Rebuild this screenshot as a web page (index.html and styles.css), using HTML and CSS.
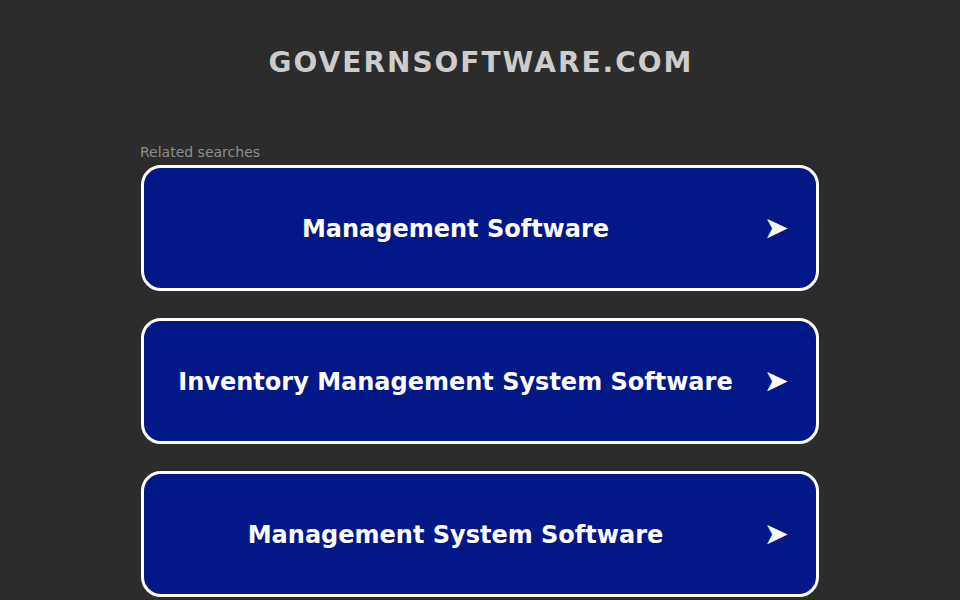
FILE: index.html
```html
<!DOCTYPE html>
<html lang="en">
  <head>
    <meta charset="UTF-8" />
    <meta name="viewport" content="width=device-width, initial-scale=1.0" />
    <title>governsoftware.com</title>
    <link rel="stylesheet" href="styles.css">
  </head>
  <body>
    <header class="domain">
      <h1>governsoftware.com</h1>
    </header>
    <main class="searches">
      <p class="searches-label">Related searches</p>
      <a href="#" class="search-link">
        <span class="search-text">Management Software</span>
        <span class="search-arrow">&#10148;</span>
      </a>
      <a href="#" class="search-link">
        <span class="search-text">Inventory Management System Software</span>
        <span class="search-arrow">&#10148;</span>
      </a>
      <a href="#" class="search-link">
        <span class="search-text">Management System Software</span>
        <span class="search-arrow">&#10148;</span>
      </a>
    </main>
  </body>
</html>
```

FILE: styles.css
```css
body {
  font-family: "DejaVu Sans", Verdana, sans-serif;
  background: #2c2c2c;
  color: #ffffff;
  margin: 0;
  padding: 0;
  height: 600px;
  overflow: hidden;
}
.domain {
  text-align: center;
  padding-top: 46px;
  padding-left: 2px;
}
.domain h1 {
  margin: 0;
  font-size: 28px;
  line-height: 34px;
  font-weight: bold;
  text-transform: uppercase;
  letter-spacing: 2px;
  color: #cccccc;
}
.searches {
  width: 678px;
  margin: 63px auto 0;
  display: flex;
  flex-direction: column;
  gap: 27px;
}
.searches-label {
  font-size: 14px;
  line-height: 17px;
  color: #8c8c8c;
  margin: 1px 0 -23px -1px;
}
.search-link {
  display: flex;
  align-items: center;
  height: 120px;
  padding: 0 27px 0 26px;
  border: 3px solid #ffffff;
  border-radius: 20px;
  background: #021887;
  color: #ffffff;
  text-decoration: none;
  font-size: 24px;
  font-weight: bold;
}
.search-text {
  flex: 1;
  text-align: center;
  padding-top: 2px;
}
.search-arrow {
  width: 48px;
  text-align: right;
  font-size: 30px;
  padding-bottom: 2px;
}
```
